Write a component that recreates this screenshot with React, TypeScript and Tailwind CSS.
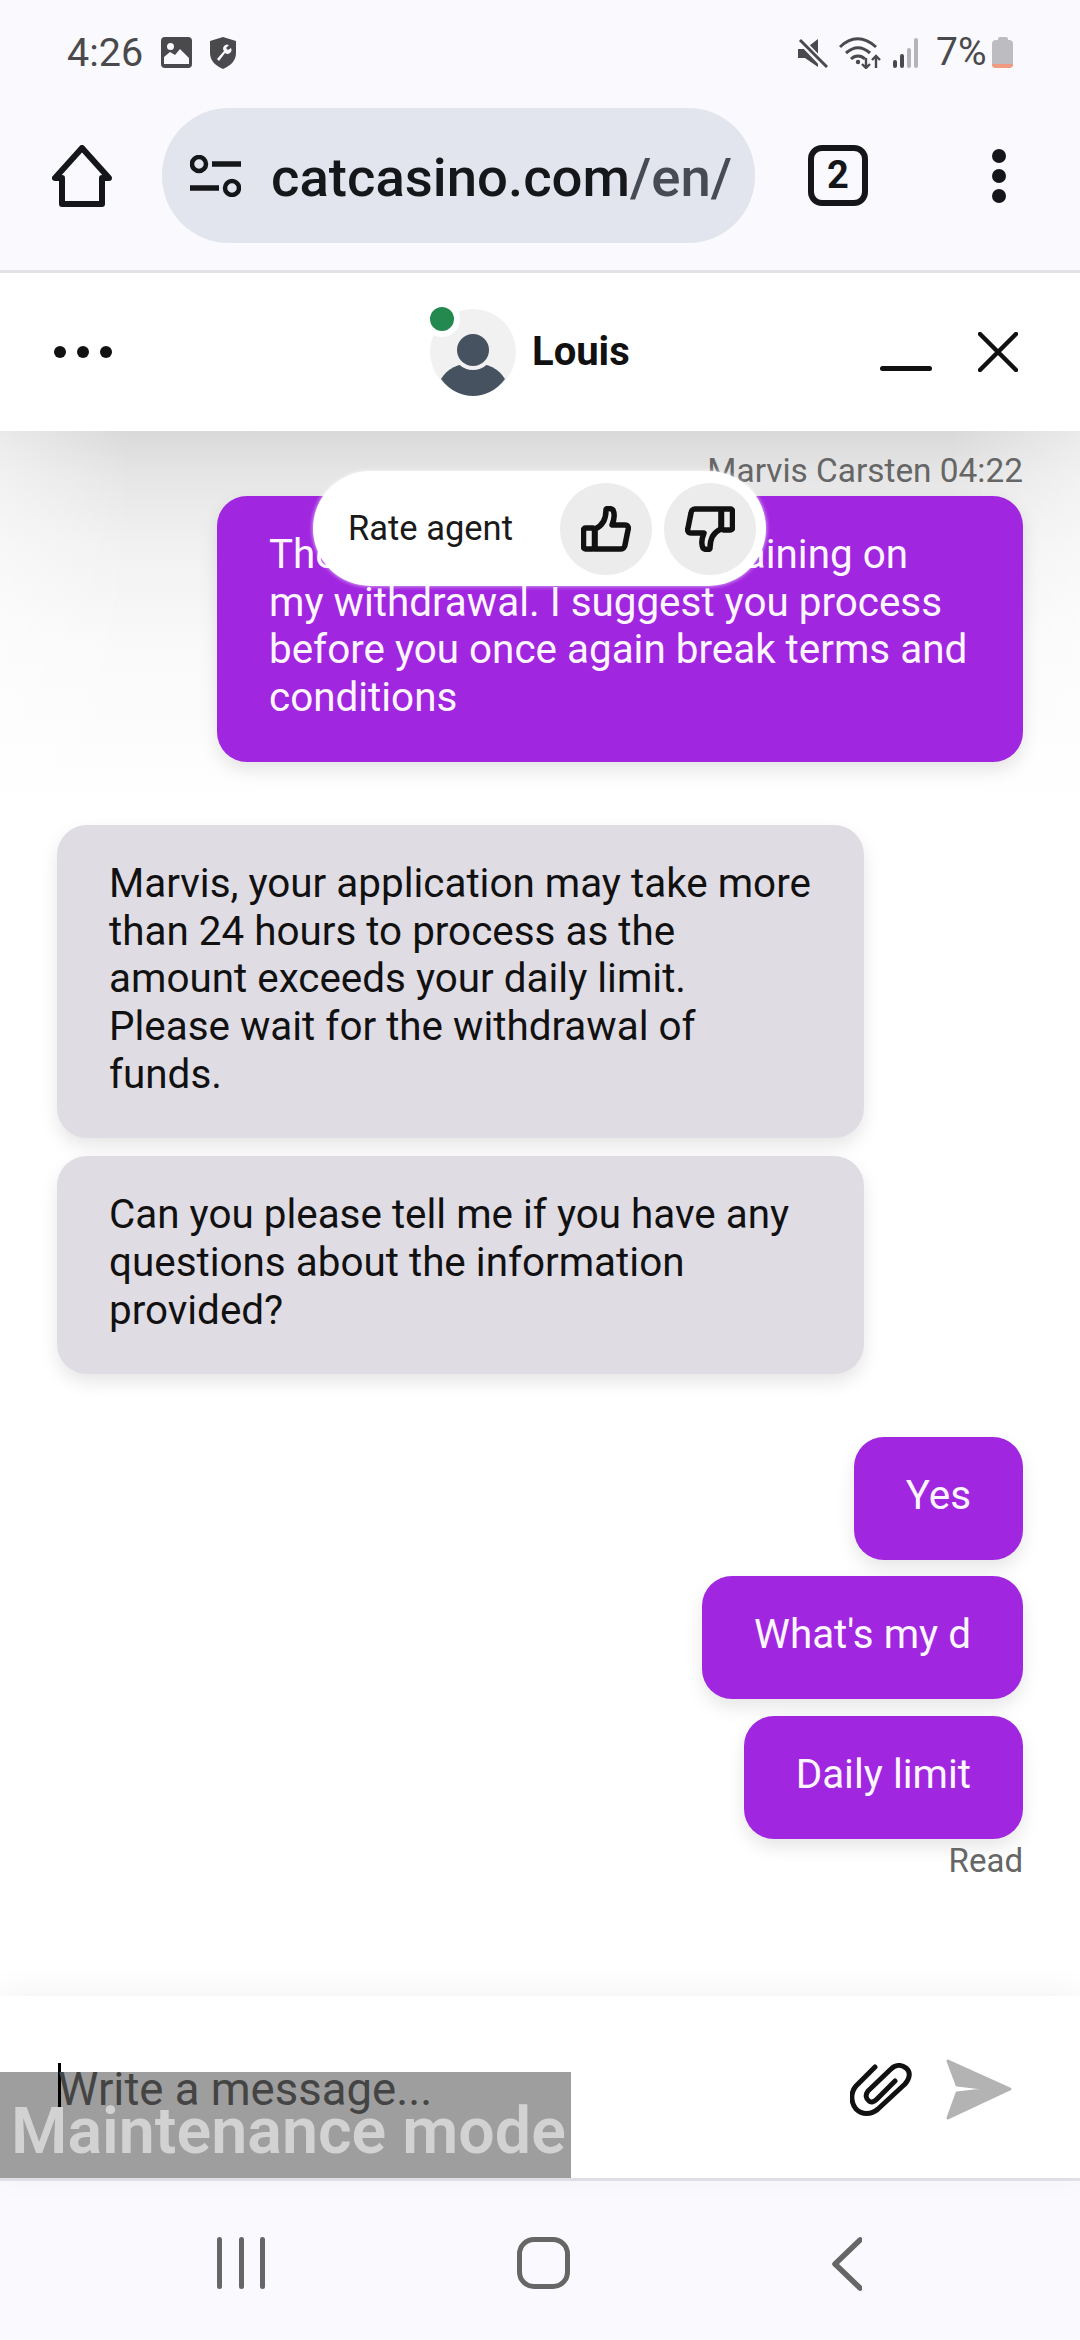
import React from "react";

const Bubble = ({ side, className, children }: { side: "me" | "them"; className?: string; children: React.ReactNode }) => (
  <div
    className={`rounded-[30px] px-[52px] pt-[35px] pb-[40px] text-[40.4px] leading-[47.7px] shadow-[0_8px_18px_rgba(0,0,0,0.1)] ${
      side === "me" ? "bg-[#a126e0] text-[#fdf6ff]" : "bg-[#e0dce4] text-[#111111]"
    } ${className ?? ""}`}
  >
    {children}
  </div>
);

const StatusBar = () => (
  <div className="relative z-20 flex h-[105px] items-center bg-[#f9f9fe] pl-[67px] pr-[67px] text-[#4a4a4d]">
    <span className="w-[77px] text-[39.5px] leading-none font-['Roboto',sans-serif]">4:26</span>
    <svg viewBox="0 0 31 31" className="ml-[17px] h-[31px] w-[31px]">
      <rect width="31" height="31" rx="4" fill="#4a4a4d" />
      <circle cx="9.5" cy="9.5" r="3.5" fill="#f9f9fe" />
      <path d="M3 27v-7l6-5 5 3 5-6 9 9v6z" fill="#f9f9fe" />
    </svg>
    <svg viewBox="0 0 26 32" className="ml-[18px] h-[32px] w-[26px]">
      <path d="M13 0l13 4v12c0 8-6 13-13 16C6 29 0 24 0 16V4z" fill="#4a4a4d" />
      <path d="M7 22l7-8a4 4 0 0 1 5-6l-3 3 2 2 3-2a4 4 0 0 1-6 5l-6 8z" fill="#f9f9fe" />
    </svg>
    <div className="flex-1" />
    <svg viewBox="0 0 30 30" className="h-[30px] w-[30px]">
      <path d="M0 11h7l13-10v28L7 20H0z" fill="#4a4a4d" />
      <path d="M2 2l26 27" stroke="#f9f9fe" strokeWidth="7" />
      <path d="M2 2l27 27" stroke="#4a4a4d" strokeWidth="3" />
    </svg>
    <svg viewBox="0 0 44 32" className="ml-[11px] h-[32px] w-[44px]" fill="none" stroke="#4a4a4d" strokeWidth="3">
      <path d="M1 10c11-11 24-11 36 0M7 16c8-7 16-7 24 0M12 22c4-4 10-4 14 0" />
      <circle cx="19" cy="25" r="2.2" fill="#4a4a4d" stroke="none" />
      <path d="M27 21v10M23 27l4 4 4-4M37 31V19M33 23l4-4 4 4" strokeWidth="2.4" />
    </svg>
    <svg viewBox="0 0 28 30" className="ml-[10px] h-[30px] w-[28px]" fill="none" strokeWidth="4" strokeLinecap="round">
      <path d="M2 24v4M9 18v10" stroke="#4a4a4d" />
      <path d="M16 12v16M23 2v26" stroke="#b5b5b8" />
    </svg>
    <span className="ml-[15px] w-[50px] text-[39px] leading-none font-['Roboto',sans-serif]">7%</span>
    <div className="ml-[6px] flex h-[31px] w-[21px] flex-col items-center">
      <div className="h-[3px] w-[10px] rounded-t-[2px] bg-[#bdbcc1]" />
      <div className="flex w-full flex-1 flex-col justify-end overflow-hidden rounded-[4px] bg-[#bdbcc1]">
        <div className="h-[4px] bg-[#f29a80]" />
      </div>
    </div>
  </div>
);

const BrowserBar = () => (
  <div className="relative z-20 flex h-[168px] items-start border-b-[3px] border-[#e2e2e6] bg-[#f9f9fe] pl-[52px] pt-[3px]">
    <svg viewBox="0 0 60 62" className="mt-[37px] h-[62px] w-[60px]" fill="none" stroke="#15161a" strokeWidth="6" strokeLinejoin="round">
      <path d="M30 3L3 33h7v26h40V33h7z" />
    </svg>
    <div className="ml-[50px] flex h-[135px] w-[593px] items-center rounded-[67px] bg-[#e2e5ed] pl-[28px]">
      <svg viewBox="0 0 51 42" className="h-[42px] w-[51px]" fill="none" stroke="#15161a" strokeWidth="4.5">
        <circle cx="9" cy="9" r="7" />
        <path d="M22 9h29M0 33h29" strokeWidth="5.5" />
        <circle cx="42" cy="33" r="7" />
      </svg>
      <span className="ml-[30px] mt-[4px] whitespace-nowrap text-[54.5px] leading-none font-medium text-[#16171b] font-['Roboto',sans-serif]">
        catcasino.com<span className="text-[#474b54]">/en/</span>
      </span>
    </div>
    <div className="ml-[53px] mt-[37px] flex h-[61px] w-[60px] items-center justify-center rounded-[14px] border-[6px] border-[#15161a] text-[38px] font-bold text-[#15161a] font-['Roboto',sans-serif]">
      2
    </div>
    <div className="ml-[124px] mt-[41px] flex h-[54px] w-[14px] flex-col justify-between">
      <div className="h-[14px] w-[14px] rounded-full bg-[#15161a]" />
      <div className="h-[14px] w-[14px] rounded-full bg-[#15161a]" />
      <div className="h-[14px] w-[14px] rounded-full bg-[#15161a]" />
    </div>
  </div>
);

const ChatHeader = () => (
  <div className="relative z-10 flex h-[158px] items-center bg-white pl-[54px]">
    <div className="flex w-[58px] justify-between">
      <div className="h-[12px] w-[12px] rounded-full bg-[#111]" />
      <div className="h-[12px] w-[12px] rounded-full bg-[#111]" />
      <div className="h-[12px] w-[12px] rounded-full bg-[#111]" />
    </div>
    <div className="relative ml-[318px] h-[86px] w-[86px] overflow-visible">
      <svg viewBox="0 0 86 88" className="h-[88px] w-[86px]">
        <circle cx="43" cy="43" r="43" fill="#f1f1f2" />
        <path d="M11 70C17 60 28 54 43 54C58 54 69 60 75 70C66 82 54 87 43 87C32 87 20 82 11 70z" fill="#465260" />
        <circle cx="43" cy="41" r="20" fill="#f1f1f2" />
        <circle cx="43" cy="41" r="16" fill="#465260" />
      </svg>
      <div className="absolute -left-[6px] -top-[8px] h-[36px] w-[36px] rounded-full border-[6px] border-white bg-[#24894f]" />
    </div>
    <span className="ml-[16px] w-[96px] text-[40px] font-bold text-[#111] font-['Roboto',sans-serif]">Louis</span>
    <div className="ml-[252px] mt-[32px] h-[5px] w-[52px] rounded-full bg-[#111]" />
    <svg viewBox="0 0 40 40" className="ml-[46px] h-[40px] w-[40px]" stroke="#111" strokeWidth="4.5" strokeLinecap="round">
      <path d="M2 2l36 36M38 2L2 38" />
    </svg>
  </div>
);

const Thumb = ({ className }: { className?: string }) => (
  <svg viewBox="0 0 50 46" className={`h-[46px] w-[50px] ${className ?? ""}`} fill="none" stroke="#111" strokeWidth="5.5" strokeLinejoin="round">
    <rect x="2.5" y="22" width="11" height="21" rx="2" />
    <path d="M14 23c7-3 11-9 11-19 0-2 5-2 7 0 2 4 1 10-1 15h13c3 0 4 3 3 5l-3 15c0 2-2 4-4 4H14z" />
  </svg>
);

const RatePill = () => (
  <div className="absolute left-[313px] top-[40px] z-10 flex h-[115px] w-[453px] items-center rounded-[58px] bg-white pl-[35px] shadow-[0_0_4px_rgba(255,255,255,0.8)]">
    <span className="w-[212px] text-[34.5px] text-[#1a1a1a]">Rate agent</span>
    <div className="flex h-[92px] w-[92px] items-center justify-center rounded-full bg-[#ececec]">
      <Thumb />
    </div>
    <div className="ml-[12px] flex h-[92px] w-[92px] items-center justify-center rounded-full bg-[#ececec]">
      <Thumb className="rotate-180" />
    </div>
  </div>
);

const Messages = () => (
  <div className="relative flex-1 overflow-hidden bg-white font-['Roboto',sans-serif]">
    <div className="absolute inset-x-0 top-0 h-[380px] bg-[linear-gradient(to_bottom,#d9d9d9,#e6e6e6_12%,#f1f1f1_30%,#f9f9f9_55%,#ffffff_100%)] [mask-image:linear-gradient(to_right,rgba(0,0,0,0.55),black_130px,black_950px,rgba(0,0,0,0.55))]" />
    <RatePill />
    <div className="relative flex flex-col px-[57px]">
      <div className="relative z-[1] mt-[22px] self-end text-[33.4px] leading-[36px] text-[#666]">Marvis Carsten 04:22</div>
      <Bubble side="me" className="mt-[7px] ml-[160px]">
        <div className="flex w-[639px] justify-between">
          <span>The</span>
          <span>aining on</span>
        </div>
        my withdrawal. I suggest you process
        <br />
        before you once again break terms and
        <br />
        conditions
      </Bubble>
      <Bubble side="them" className="mt-[63px] mr-[159px]">
        Marvis, your application may take more
        <br />
        than 24 hours to process as the
        <br />
        amount exceeds your daily limit.
        <br />
        Please wait for the withdrawal of
        <br />
        funds.
      </Bubble>
      <Bubble side="them" className="mt-[18px] mr-[159px]">
        Can you please tell me if you have any
        <br />
        questions about the information
        <br />
        provided?
      </Bubble>
      <Bubble side="me" className="mt-[63px] self-end">Yes</Bubble>
      <Bubble side="me" className="mt-[16px] self-end">What's my d</Bubble>
      <Bubble side="me" className="mt-[17px] self-end">Daily limit</Bubble>
      <div className="mt-[4px] self-end text-[33px] leading-[36px] text-[#666]">Read</div>
    </div>
  </div>
);

const Composer = () => (
  <div className="relative flex h-[182px] items-start bg-white pl-[58px] shadow-[0_-4px_30px_rgba(0,0,0,0.05)] font-['Roboto',sans-serif]">
    <div className="mt-[67px] h-[53px] w-[3px] bg-black" />
    <span className="mt-[69px] -ml-[3px] w-[792px] text-[45.5px] leading-[50px] text-[#6e6e6e]">Write a message...</span>
    <svg viewBox="0 0 62 54" className="mt-[67px] h-[54px] w-[62px]" fill="none" stroke="#111" strokeWidth="5" strokeLinecap="round" strokeLinejoin="round">
      <path d="M25 4L6 23C0 30 1 40 6 46C12 52 21 52 28 46L55 21C61 14 60 8 56 5C51 1 45 2 41 6L18 28C15 32 16 36 19 38C21 40 24 39 27 36L45 18" />
    </svg>
    <svg viewBox="0 0 67 61" className="ml-[33px] mt-[63px] h-[61px] w-[67px]" fill="#b3b3b3" stroke="#b3b3b3" strokeWidth="3" strokeLinejoin="round">
      <path d="M3 2l62 28-62 29 9-25 34-4-34-4z" />
    </svg>
    <div className="absolute bottom-0 left-0 flex h-[106px] w-[571px] items-start bg-[rgba(0,0,0,0.38)] pl-[11px]">
      <span className="mt-[24px] whitespace-nowrap text-[64.5px] font-semibold leading-[70px] text-[#d2d2d2]">Maintenance mode</span>
    </div>
  </div>
);

const NavBar = () => (
  <div className="flex h-[162px] items-start border-t-[3px] border-[#e2e2e8] bg-[#f9f9fe] pl-[217px] pt-[56px]">
    <div className="flex h-[52px] w-[48px] justify-between">
      <div className="h-full w-[5px] rounded-full bg-[#666]" />
      <div className="h-full w-[5px] rounded-full bg-[#666]" />
      <div className="h-full w-[5px] rounded-full bg-[#666]" />
    </div>
    <div className="ml-[252px] h-[52px] w-[53px] rounded-[17px] border-[5px] border-[#666]" />
    <svg viewBox="0 0 30 54" className="ml-[262px] h-[54px] w-[30px]" fill="none" stroke="#666" strokeWidth="5.5" strokeLinecap="round" strokeLinejoin="round">
      <path d="M28 3L3 27l25 24" />
    </svg>
  </div>
);

export default function App() {
  return (
    <div className="flex h-[2340px] w-[1080px] flex-col overflow-hidden bg-[#f9f9fe]">
      <StatusBar />
      <BrowserBar />
      <ChatHeader />
      <Messages />
      <Composer />
      <NavBar />
    </div>
  );
}
